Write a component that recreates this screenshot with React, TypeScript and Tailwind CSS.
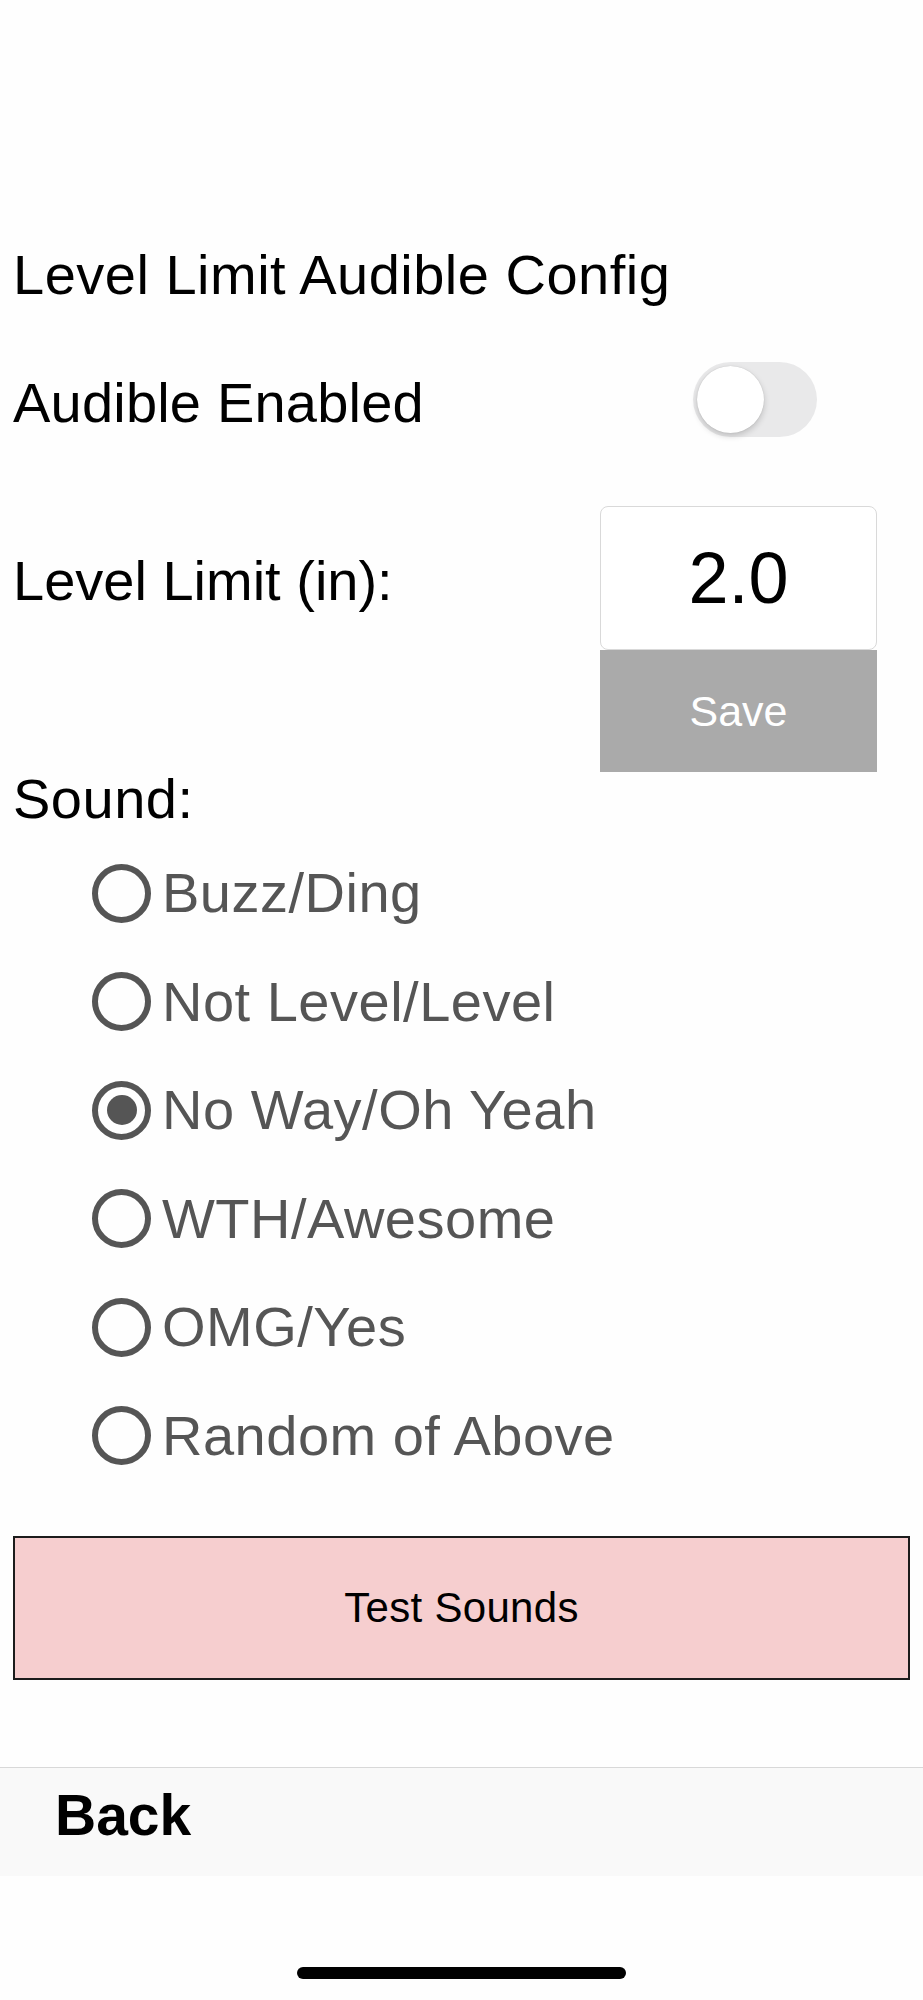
import { useState } from 'react'

/* Level Limit Audible Config — settings screen */

const SOUNDS = [
  'Buzz/Ding',
  'Not Level/Level',
  'No Way/Oh Yeah',
  'WTH/Awesome',
  'OMG/Yes',
  'Random of Above',
]

function Toggle({ on, onChange }: { on: boolean; onChange: (v: boolean) => void }) {
  return (
    <button
      onClick={() => onChange(!on)}
      className={`w-[124px] h-[75px] rounded-full flex items-center px-[4px] ${on ? 'bg-[#4cd964] justify-end' : 'bg-[#e9e9ea] justify-start'}`}
    >
      <span className="block w-[67px] h-[67px] rounded-full bg-white shadow-[0_3px_6px_rgba(0,0,0,0.18),0_0_1px_rgba(0,0,0,0.2)]" />
    </button>
  )
}

function Radio({ label, selected, onSelect }: { label: string; selected: boolean; onSelect: () => void }) {
  return (
    <div onClick={onSelect} className="h-[108.5px] flex items-center cursor-pointer">
      <div className="w-[59px] h-[59px] rounded-full border-[6px] border-[#555555] flex items-center justify-center shrink-0">
        {selected && <div className="w-[30px] h-[30px] rounded-full bg-[#555555]" />}
      </div>
      <span className="ml-[11px] text-[56px] leading-none tracking-[0.5px] text-[#555555]">{label}</span>
    </div>
  )
}

export default function App() {
  const [enabled, setEnabled] = useState(false)
  const [limit, setLimit] = useState('2.0')
  const [sound, setSound] = useState(2)

  return (
    <div
      className="w-[923px] h-[2000px] bg-[#fefefe] flex flex-col text-black"
      style={{ fontFamily: '"Liberation Sans", Arial, sans-serif' }}
    >
      <div className="px-[13px] pt-[244px]">
        {/* Title */}
        <h1 className="h-[59px] pt-[3px] text-[56px] leading-none tracking-[0.5px] font-normal">Level Limit Audible Config</h1>

        {/* Audible enabled */}
        <div className="mt-[59px] h-[75px] flex items-center">
          <span className="flex-1 pt-[6px] text-[56px] leading-none tracking-[0.2px]">Audible Enabled</span>
          <div className="mr-[93px]">
            <Toggle on={enabled} onChange={setEnabled} />
          </div>
        </div>

        {/* Level limit */}
        <div className="mt-[69px] flex items-start">
          <div className="flex-1 h-[144px] flex items-center">
            <span className="pt-[6px] text-[56px] leading-none">Level Limit (in):</span>
          </div>
          <div className="w-[277px] mr-[33px] flex flex-col">
            <input
              value={limit}
              onChange={e => setLimit(e.target.value)}
              className="h-[144px] w-full rounded-[8px] border border-[#d9d9d9] bg-white text-center text-[72px] leading-none outline-none"
            />
            <button className="h-[122px] w-full bg-[#aaaaaa] text-white text-[43px] leading-none">Save</button>
          </div>
        </div>

        {/* Sound picker */}
        <div className="-mt-[1px] h-[56px] text-[56px] leading-none tracking-[0.5px]">Sound:</div>
        <div className="mt-[12px] pl-[79px]">
          {SOUNDS.map((s, i) => (
            <Radio key={s} label={s} selected={sound === i} onSelect={() => setSound(i)} />
          ))}
        </div>

        <button className="mt-[46px] w-[897px] h-[144px] bg-[#f6cecf] border-2 border-[#1c1c1c] text-[42px] leading-none tracking-[0.3px] text-black">
          Test Sounds
        </button>
      </div>

      {/* Bottom bar */}
      <div className="mt-[87px] h-[109px] border-t border-[#d8d8d8] bg-[#f9f9f9] pt-[19px] pl-[55px]">
        <span className="text-[57px] leading-none font-bold">Back</span>
      </div>

      <div className="mt-[91px] mx-auto w-[329px] h-[12px] rounded-full bg-black" />
    </div>
  )
}
